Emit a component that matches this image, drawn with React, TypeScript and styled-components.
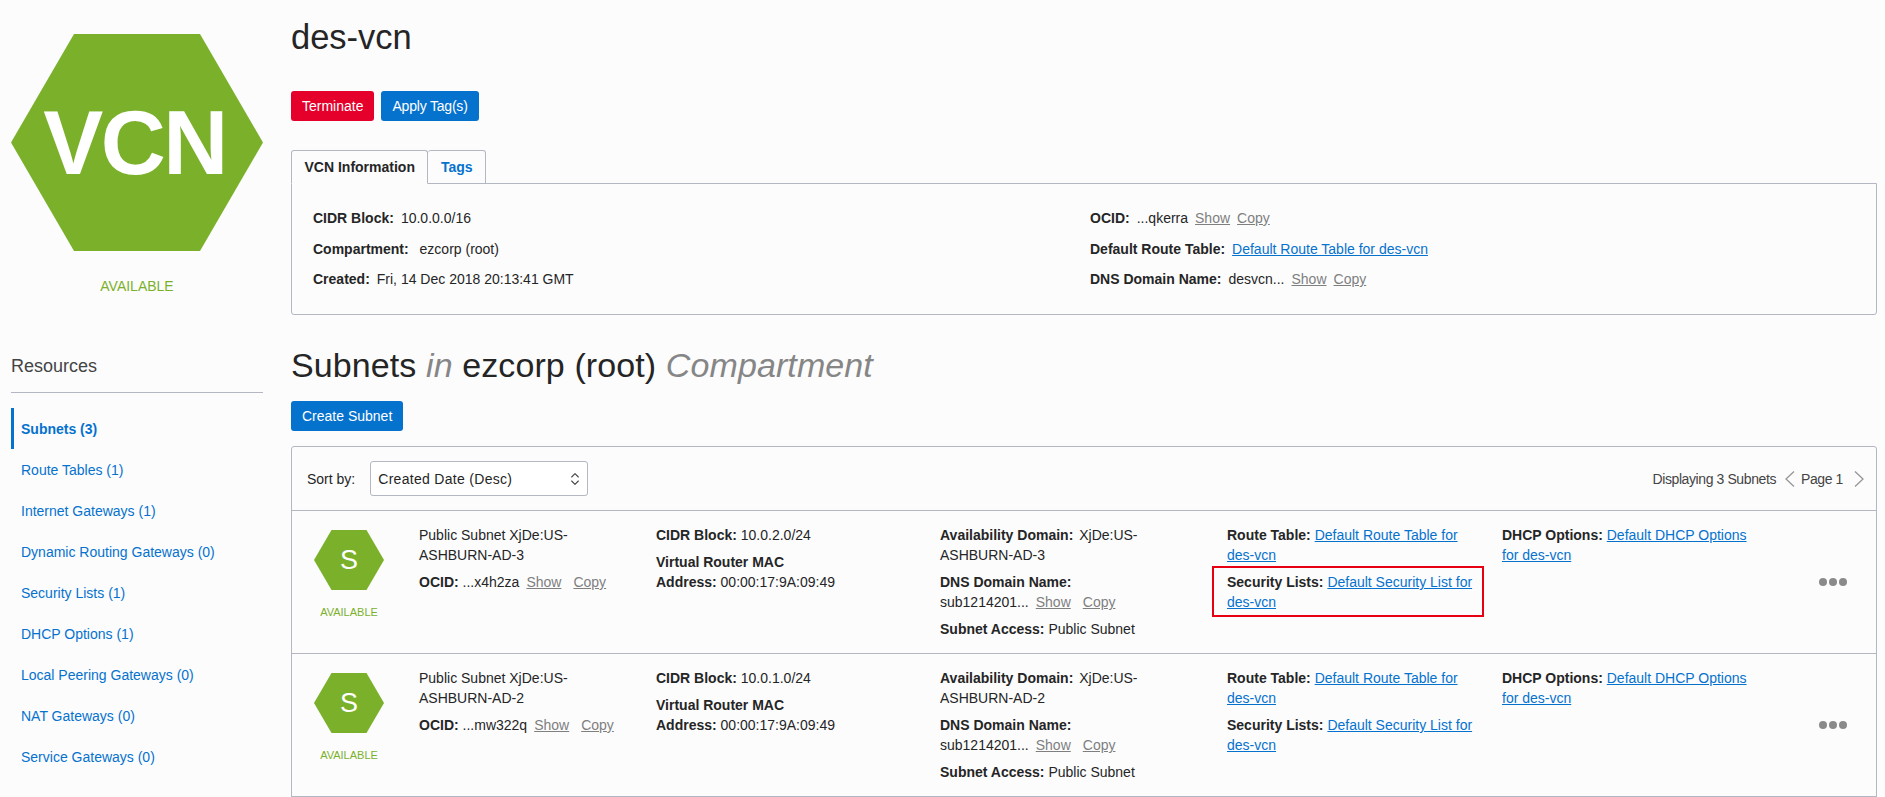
import React from "react";
import styled, { createGlobalStyle } from "styled-components";
import { ChevronsUpDown } from "lucide-react";

const Global = createGlobalStyle`
  html, body { margin: 0; padding: 0; height: 100%; overflow: hidden; background: #fcfcfd; }
  body { font-family: "Liberation Sans", Arial, sans-serif; font-size: 14px; line-height: 20px; color: #252525; }
  * { box-sizing: border-box; }
`;

const GREEN = "#7bb12a";
const BLUE = "#0572ce";
const LINE = "#b3b7c2";

const Page = styled.div`
  display: flex;
  height: 797px;
  overflow: hidden;
  padding: 0 8px 0 11px;
`;
const Sidebar = styled.aside`
  flex: 0 0 252px;
  margin-right: 28px;
  padding-top: 34px;
  display: flex;
  flex-direction: column;
`;
const Hex = styled.div<{ $size: "lg" | "sm" }>`
  flex: none;
  width: ${(p) => (p.$size === "lg" ? "252px" : "70px")};
  height: ${(p) => (p.$size === "lg" ? "217px" : "60px")};
  padding-right: ${(p) => (p.$size === "lg" ? "5px" : "0")};
  background: ${GREEN};
  clip-path: polygon(25% 0, 75% 0, 100% 50%, 75% 100%, 25% 100%, 0 50%);
  color: #fff;
  display: flex;
  align-items: center;
  justify-content: center;
  font-weight: ${(p) => (p.$size === "lg" ? 700 : 400)};
  font-size: ${(p) => (p.$size === "lg" ? "90px" : "27px")};
  letter-spacing: ${(p) => (p.$size === "lg" ? "-2.5px" : "0")};
`;
const Status = styled.div`
  margin-top: 25px;
  text-align: center;
  color: ${GREEN};
`;
const ResourcesTitle = styled.h3`
  margin: 58px 0 15px;
  padding-bottom: 14px;
  border-bottom: 1px solid ${LINE};
  font-weight: 400;
  font-size: 18px;
  line-height: 24px;
  color: #444;
`;
const NavItem = styled.a<{ $active?: boolean }>`
  display: flex;
  align-items: center;
  height: 41px;
  padding-left: ${(p) => (p.$active ? "7px" : "10px")};
  border-left: ${(p) => (p.$active ? `3px solid ${BLUE}` : "none")};
  color: ${BLUE};
  font-weight: ${(p) => (p.$active ? 700 : 400)};
`;
const Main = styled.main`
  flex: 1;
  min-width: 0;
  padding-top: 17px;
`;
const Title = styled.h1`
  margin: 0 0 34px;
  font-weight: 400;
  font-size: 34.5px;
  line-height: 40px;
  color: #252525;
`;
const Actions = styled.div`
  display: flex;
  gap: 7px;
  margin-bottom: 29px;
`;
const Button = styled.button<{ $danger?: boolean; $tight?: boolean }>`
  height: 30px;
  padding: 0 11px;
  border: 0;
  border-radius: 3px;
  background: ${(p) => (p.$danger ? "#e4002b" : BLUE)};
  color: #fff;
  font: 14px "Liberation Sans", Arial, sans-serif;
  letter-spacing: ${(p) => (p.$tight ? "-0.2px" : "0")};
`;
const Tabs = styled.div`
  display: flex;
  margin-bottom: -1px;
`;
const Tab = styled.div<{ $active?: boolean }>`
  position: relative;
  height: 34px;
  padding: 0 12.5px;
  display: flex;
  align-items: center;
  font-weight: 700;
  border: 1px solid ${LINE};
  border-left-width: ${(p) => (p.$active ? "1px" : "0")};
  border-bottom-color: ${(p) => (p.$active ? "#fcfcfd" : LINE)};
  border-radius: 3px 3px 0 0;
  background: #fcfcfd;
  color: ${(p) => (p.$active ? "#252525" : BLUE)};
`;
const InfoPanel = styled.section`
  display: grid;
  grid-template-columns: 777px 1fr;
  grid-auto-rows: 20px;
  row-gap: 10.5px;
  padding: 24px 21px;
  height: 132px;
  border: 1px solid ${LINE};
  border-radius: 0 0 3px 3px;
`;
const InfoRow = styled.div`
  display: flex;
  gap: 7px;
  white-space: nowrap;
`;
const Label = styled.b`
  font-weight: 700;
`;
const Link = styled.a`
  color: ${BLUE};
  text-decoration: underline;
`;
const Muted = styled.a`
  color: #7f7f7f;
  text-decoration: underline;
`;
const SectionTitle = styled.h2`
  margin: 30px 0 16px;
  font-weight: 400;
  font-size: 34px;
  line-height: 40px;
  letter-spacing: 0.1px;
  white-space: nowrap;
`;
const Faint = styled.i`
  color: #868686;
`;
const ListPanel = styled.section`
  margin-top: 15px;
  border: 1px solid ${LINE};
  border-radius: 3px 3px 0 0;
`;
const SortBar = styled.div`
  display: flex;
  align-items: center;
  height: 64px;
  padding: 0 4px 0 15px;
  border-bottom: 1px solid ${LINE};
`;
const SortLabel = styled.span`
  margin-right: 15px;
`;
const SelectBox = styled.div`
  width: 218px;
  height: 35px;
  padding: 0 4px 0 7px;
  display: flex;
  align-items: center;
  justify-content: space-between;
  border: 1px solid ${LINE};
  border-radius: 3px;
  background: #fff;
  letter-spacing: 0.3px;
  color: #252525;
`;
const Pager = styled.div`
  margin-left: auto;
  display: flex;
  align-items: center;
  letter-spacing: -0.4px;
  color: #444;
`;
const PagerChevron = styled.svg<{ $left?: boolean }>`
  display: block;
  margin: ${(p) => (p.$left ? "0 6px 0 9px" : "0 8px 0 11px")};
`;
const SubnetRow = styled.div`
  display: grid;
  grid-template-columns: 105px 237px 284px 287px 275px 260px 1fr;
  padding: 14px 29px 14px 22px;
  border-bottom: 1px solid ${LINE};
`;
const IconCol = styled.div`
  display: flex;
  flex-direction: column;
  align-items: flex-start;
  padding-top: 5px;
`;
const SmallStatus = styled.div`
  width: 70px;
  margin-top: 15px;
  text-align: center;
  font-size: 11px;
  line-height: 14px;
  color: ${GREEN};
`;
const Col = styled.div`
  display: flex;
  flex-direction: column;
  gap: 7px;
`;
const Field = styled.div<{ $width?: number; $boxed?: boolean }>`
  position: relative;
  max-width: ${(p) => p.$width ?? 250}px;
  ${(p) =>
    p.$boxed &&
    `&::after {
      content: "";
      position: absolute;
      inset: -6px -5px -5px -15px;
      border: 2px solid #e60012;
      pointer-events: none;
    }`}
`;
const Nowrap = styled.span`
  white-space: nowrap;
`;
const Gap = styled.span<{ $w: number }>`
  display: inline-block;
  width: ${(p) => p.$w}px;
`;
const MoreCol = styled.div`
  display: flex;
  align-items: center;
  justify-content: flex-end;
  gap: 2px;
`;
const Dot = styled.span`
  width: 8px;
  height: 8px;
  border-radius: 50%;
  background: #8a8a8a;
`;

const resources = [
  "Subnets (3)",
  "Route Tables (1)",
  "Internet Gateways (1)",
  "Dynamic Routing Gateways (0)",
  "Security Lists (1)",
  "DHCP Options (1)",
  "Local Peering Gateways (0)",
  "NAT Gateways (0)",
  "Service Gateways (0)",
];

const subnets = [
  { ad: "3", ocid: "...x4h2za", cidr: "10.0.2.0/24", boxed: true },
  { ad: "2", ocid: "...mw322q", cidr: "10.0.1.0/24", boxed: false },
];

const Chevron = ({ left }: { left?: boolean }) => (
  <PagerChevron $left={left} width="10" height="16" viewBox="0 0 10 16" fill="none" stroke="#969696" strokeWidth="1.3">
    <polyline points={left ? "9,0.5 1,8 9,15.5" : "1,0.5 9,8 1,15.5"} />
  </PagerChevron>
);

export default function App() {
  return (
    <>
      <Global />
      <Page>
        <Sidebar>
          <Hex $size="lg">VCN</Hex>
          <Status>AVAILABLE</Status>
          <ResourcesTitle>Resources</ResourcesTitle>
          {resources.map((r, i) => (
            <NavItem key={r} $active={i === 0}>
              {r}
            </NavItem>
          ))}
        </Sidebar>
        <Main>
          <Title>des-vcn</Title>
          <Actions>
            <Button $danger>Terminate</Button>
            <Button $tight>Apply Tag(s)</Button>
          </Actions>
          <Tabs>
            <Tab $active>VCN Information</Tab>
            <Tab>Tags</Tab>
          </Tabs>
          <InfoPanel>
            <InfoRow>
              <Label>CIDR Block:</Label>
              <span>10.0.0.0/16</span>
            </InfoRow>
            <InfoRow>
              <Label>OCID:</Label>
              <span>...qkerra</span>
              <Muted>Show</Muted>
              <Muted>Copy</Muted>
            </InfoRow>
            <InfoRow>
              <Label>Compartment:</Label>
              <span>&nbsp;ezcorp (root)</span>
            </InfoRow>
            <InfoRow>
              <Label>Default Route Table:</Label>
              <Link>Default Route Table for des-vcn</Link>
            </InfoRow>
            <InfoRow>
              <Label>Created:</Label>
              <span>Fri, 14 Dec 2018 20:13:41 GMT</span>
            </InfoRow>
            <InfoRow>
              <Label>DNS Domain Name:</Label>
              <span>desvcn...</span>
              <Muted>Show</Muted>
              <Muted>Copy</Muted>
            </InfoRow>
          </InfoPanel>
          <SectionTitle>
            Subnets <Faint>in</Faint> ezcorp (root) <Faint>Compartment</Faint>
          </SectionTitle>
          <Button>Create Subnet</Button>
          <ListPanel>
            <SortBar>
              <SortLabel>Sort by:</SortLabel>
              <SelectBox>
                Created Date (Desc)
                <ChevronsUpDown size={16} strokeWidth={1.6} color="#444" />
              </SelectBox>
              <Pager>
                Displaying 3 Subnets
                <Chevron left />
                Page 1
                <Chevron />
              </Pager>
            </SortBar>
            {subnets.map((s) => (
              <SubnetRow key={s.ad}>
                <IconCol>
                  <Hex $size="sm">S</Hex>
                  <SmallStatus>AVAILABLE</SmallStatus>
                </IconCol>
                <Col>
                  <Field $width={205}>Public Subnet XjDe:US-ASHBURN-AD-{s.ad}</Field>
                  <Field>
                    <Nowrap>
                      <Label>OCID:</Label> {s.ocid}
                      <Gap $w={7} />
                      <Muted>Show</Muted>
                      <Gap $w={12} />
                      <Muted>Copy</Muted>
                    </Nowrap>
                  </Field>
                </Col>
                <Col>
                  <Field>
                    <Label>CIDR Block:</Label> {s.cidr}
                  </Field>
                  <Field $width={182}>
                    <Label>Virtual Router MAC Address:</Label> 00:00:17:9A:09:49
                  </Field>
                </Col>
                <Col>
                  <Field $width={225}>
                    <Label>Availability Domain:</Label>
                    <Gap $w={2} /> XjDe:US-ASHBURN-AD-{s.ad}
                  </Field>
                  <Field>
                    <Label>DNS Domain Name:</Label>{" "}
                    <Nowrap>
                      sub1214201...
                      <Gap $w={7} />
                      <Muted>Show</Muted>
                      <Gap $w={12} />
                      <Muted>Copy</Muted>
                    </Nowrap>
                  </Field>
                  <Field>
                    <Label>Subnet Access:</Label> Public Subnet
                  </Field>
                </Col>
                <Col>
                  <Field $width={252}>
                    <Label>Route Table:</Label> <Link>Default Route Table for des-vcn</Link>
                  </Field>
                  <Field $width={252} $boxed={s.boxed}>
                    <Label>Security Lists:</Label> <Link>Default Security List for des-vcn</Link>
                  </Field>
                </Col>
                <Col>
                  <Field $width={255}>
                    <Label>DHCP Options:</Label> <Link>Default DHCP Options for des-vcn</Link>
                  </Field>
                </Col>
                <MoreCol>
                  <Dot />
                  <Dot />
                  <Dot />
                </MoreCol>
              </SubnetRow>
            ))}
          </ListPanel>
        </Main>
      </Page>
    </>
  );
}
